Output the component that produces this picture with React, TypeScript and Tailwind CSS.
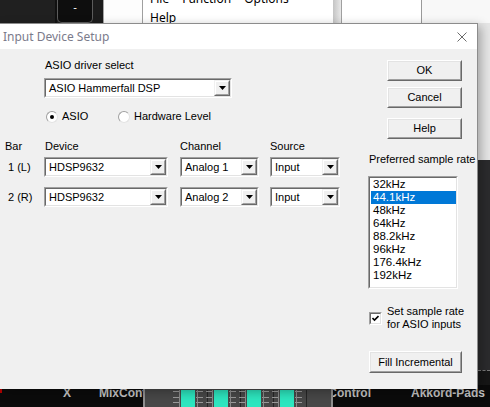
import React from 'react';

const DropButton: React.FC = () => (
  <div className="h-full w-[16px] border border-t-[#f0f0f0] border-l-[#f0f0f0] border-r-[#696969] border-b-[#696969]">
    <div className="h-full w-full border border-t-white border-l-white border-r-[#a0a0a0] border-b-[#a0a0a0] bg-[#f0f0f0] flex items-center justify-center">
      <svg width="7" height="4" viewBox="0 0 7 4">
        <path d="M0 0H7L3.5 4Z" fill="#000" />
      </svg>
    </div>
  </div>
);

const Sunken: React.FC<{ className?: string; children?: React.ReactNode }> = ({ className = '', children }) => (
  <div className={`border border-t-[#a0a0a0] border-l-[#a0a0a0] border-r-white border-b-white ${className}`}>
    <div className="h-full w-full border border-t-[#696969] border-l-[#696969] border-r-[#e3e3e3] border-b-[#e3e3e3] bg-white">
      {children}
    </div>
  </div>
);

const Combo: React.FC<{ value: string; width: string }> = ({ value, width }) => (
  <Sunken className={`h-[20px] ${width}`}>
    <div className="flex h-full items-center">
      <span className="flex-1 pl-[3px] whitespace-nowrap overflow-hidden">{value}</span>
      <DropButton />
    </div>
  </Sunken>
);

const Btn: React.FC<{ label: string; className: string }> = ({ label, className }) => (
  <div className={`border border-t-white border-l-white border-r-[#696969] border-b-[#696969] ${className}`}>
    <div className="h-full w-full border border-t-[#e3e3e3] border-l-[#e3e3e3] border-r-[#a0a0a0] border-b-[#a0a0a0] bg-[#f0f0f0] flex items-center justify-center">
      {label}
    </div>
  </div>
);

const Radio: React.FC<{ checked?: boolean; label: string }> = ({ checked, label }) => (
  <div className="flex items-center gap-[4px]">
    <div className="w-[12px] h-[12px] rounded-full bg-white border border-t-[#a0a0a0] border-l-[#a0a0a0] border-r-[#e3e3e3] border-b-[#e3e3e3] flex items-center justify-center">
      {checked && <div className="w-[4px] h-[4px] rounded-full bg-black" />}
    </div>
    <span>{label}</span>
  </div>
);

const rates = ['32kHz', '44.1kHz', '48kHz', '64kHz', '88.2kHz', '96kHz', '176.4kHz', '192kHz'];

const FaderStrip: React.FC = () => {
  const squares = [38, 71, 104, 137];
  return (
    <svg width="190" height="22" viewBox="0 0 190 22" className="block">
      <rect x="0" y="0" width="190" height="22" fill="#484848" />
      <rect x="0" y="0" width="2" height="22" fill="#8f8f8f" />
      <rect x="188" y="0" width="2" height="22" fill="#8f8f8f" />
      {squares.map((s) => (
        <g key={s}>
          {[6.5, 12.5, 17.5].map((y) => (
            <g key={y}>
              <line x1={s - 8} y1={y} x2={s - 1} y2={y} stroke="#9a9a9a" />
              <line x1={s + 15} y1={y} x2={s + 22} y2={y} stroke="#9a9a9a" />
            </g>
          ))}
          <line x1={s - 1.5} y1="5" x2={s - 1.5} y2="22" stroke="#8a8a8a" />
          <line x1={s + 16.5} y1="5" x2={s + 16.5} y2="22" stroke="#8a8a8a" />
          <line x1={s + 26.5} y1="5" x2={s + 26.5} y2="22" stroke="#262626" />
          <rect x={s} y="5" width="14" height="17" fill="#2de6bf" />
        </g>
      ))}
    </svg>
  );
};

const App: React.FC = () => {
  return (
    <div className="relative w-[490px] h-[407px] overflow-hidden flex flex-col bg-[#1f1f1f] font-['Liberation_Sans',Arial,sans-serif]">
      {/* Background app: top strip */}
      <div className="h-[23px] flex shrink-0">
        <div className="w-[55px] bg-[#202020]" />
        <div className="w-[2px] bg-[#111]" />
        <div className="w-[36px] bg-[#0e0e0e] border-x border-b border-[#5c5c5c] rounded-b-[5px] flex justify-center text-white text-[11px] leading-[14px]">
          -
        </div>
        <div className="w-[10px] bg-[#1c1c1c]" />
        <div className="w-[1px] bg-[#a5a5a5]" />
        <div className="w-[38px] bg-[#fdfdfd]" />
        <div className="w-[191px] bg-white border-l border-[#a0a0a0] overflow-hidden font-['Noto_Sans',sans-serif] text-[12px] text-black">
          <div className="-mt-[11px] pl-[7px]">
            <div className="flex gap-[13px] leading-[19px] h-[19px]">
              <span>File</span>
              <span>Function</span>
              <span>Options</span>
            </div>
            <div className="leading-[19px]">Help</div>
          </div>
        </div>
        <div className="w-[8px] bg-gradient-to-r from-[#c4c4c4] to-[#e8e8e8]" />
        <div className="w-[1px] bg-[#a0a0a0]" />
        <div className="w-[79px] bg-white" />
        <div className="w-[1px] bg-[#9a9a9a]" />
        <div className="flex-1 bg-[#f8f8f8]" />
      </div>

      {/* Background app: middle */}
      <div className="flex flex-1">
        <div className="flex-1 bg-[#f0f0f0]" />
        <div className="w-[12px] flex flex-col">
          <div className="h-[137px] bg-[#e6e6e6]" />
          <div className="h-[210px] bg-[#2b2b2d]" />
          <div className="h-[1px] border-t border-dashed border-[#7a7a7a]" />
          <div className="flex-1 bg-[#161616]" />
        </div>
      </div>

      {/* Background app: bottom bar */}
      <div className="h-[22px] shrink-0 flex bg-[#0b0b0b] text-[12px] font-bold text-[#c4c4c4] leading-[14px]">
        <div className="w-[2px] h-[8px] bg-[#b00000]" />
        <div className="w-[61px]" />
        <div className="w-[36px] pt-[1px]">X</div>
        <div className="w-[44px] pt-[1px] overflow-hidden whitespace-nowrap">MixControl</div>
        <FaderStrip />
        <div className="w-[38px] pt-[1px] overflow-hidden whitespace-nowrap flex justify-end">Control</div>
        <div className="w-[40px]" />
        <div className="pt-[1px] whitespace-nowrap">Akkord-Pads</div>
      </div>

      {/* Dialog window */}
      <div className="absolute left-0 top-[23px] w-[478px] h-[366px] flex flex-col border-t border-r border-[#8c8c8c] bg-[#f0f0f0] shadow-[3px_3px_10px_rgba(0,0,0,0.3)] text-[11px] text-black">
        <div className="h-[25px] shrink-0 bg-white flex items-center justify-between pl-[3px] pr-[10px]">
          <span className="font-['Noto_Sans',sans-serif] text-[12px] text-[#7b7b8b]">Input Device Setup</span>
          <svg width="10" height="10" viewBox="0 0 10 10">
            <path d="M0.5 0.5L9.5 9.5M9.5 0.5L0.5 9.5" stroke="#6b6b6b" strokeWidth="1" />
          </svg>
        </div>

        <div className="flex flex-1">
          {/* Left section */}
          <div className="w-[368px] flex flex-col pt-[10px]">
            <div className="ml-[45px] h-[13px] leading-[13px]">ASIO driver select</div>
            <div className="ml-[44px] mt-[6px]">
              <Combo value="ASIO Hammerfall DSP" width="w-[188px]" />
            </div>
            <div className="ml-[46px] mt-[12px] h-[13px] flex items-center">
              <div className="w-[72px]">
                <Radio checked label="ASIO" />
              </div>
              <Radio label="Hardware Level" />
            </div>

            <div className="ml-[4px] mt-[17px] h-[13px] leading-[13px] grid grid-cols-[40px_136px_90px_70px]">
              <span className="pl-[1px]">Bar</span>
              <span className="pl-[1px]">Device</span>
              <span>Channel</span>
              <span>Source</span>
            </div>
            <div className="ml-[4px] mt-[4px] grid grid-cols-[40px_136px_90px_70px] items-center">
              <span className="pl-[4px]">1 (L)</span>
              <Combo value="HDSP9632" width="w-[124px]" />
              <Combo value="Analog 1" width="w-[79px]" />
              <Combo value="Input" width="w-[70px]" />
            </div>
            <div className="ml-[4px] mt-[10px] grid grid-cols-[40px_136px_90px_70px] items-center">
              <span className="pl-[4px]">2 (R)</span>
              <Combo value="HDSP9632" width="w-[124px]" />
              <Combo value="Analog 2" width="w-[79px]" />
              <Combo value="Input" width="w-[70px]" />
            </div>
          </div>

          {/* Right section */}
          <div className="flex-1 flex flex-col">
            <Btn label="OK" className="ml-[19px] mt-[11px] w-[75px] h-[21px]" />
            <Btn label="Cancel" className="ml-[19px] mt-[6px] w-[75px] h-[21px]" />
            <Btn label="Help" className="ml-[19px] mt-[10px] w-[75px] h-[21px]" />

            <div className="mt-[14px] ml-[1px] h-[13px] leading-[13px] whitespace-nowrap">Preferred sample rate</div>
            <Sunken className="mt-[10px] w-[90px] h-[113px]">
              <div className="pl-[1px] pr-[0px] flex flex-col text-[11.5px]">
                {rates.map((r) => (
                  <div
                    key={r}
                    className={`h-[13px] leading-[13px] pl-[2px] whitespace-nowrap ${r === '44.1kHz' ? 'bg-[#0078d7] text-white' : ''}`}
                  >
                    {r}
                  </div>
                ))}
              </div>
            </Sunken>

            <div className="mt-[16px] ml-[1px] h-[26px] flex items-center gap-[5px]">
              <div className="w-[13px] h-[13px] shrink-0 border border-t-[#a0a0a0] border-l-[#a0a0a0] border-r-white border-b-white">
                <div className="h-full w-full border border-t-[#696969] border-l-[#696969] border-r-[#e3e3e3] border-b-[#e3e3e3] bg-white flex items-center justify-center">
                  <svg width="7" height="7" viewBox="0 0 7 7">
                    <path d="M0.5 3L2.5 5L6.5 1" stroke="#000" strokeWidth="1.6" fill="none" />
                  </svg>
                </div>
              </div>
              <div className="leading-[13px]">
                <div>Set sample rate</div>
                <div>for ASIO inputs</div>
              </div>
            </div>

            <Btn label="Fill Incremental" className="ml-[1px] mt-[20px] w-[93px] h-[22px]" />
          </div>
        </div>
      </div>
    </div>
  );
};

export default App;
